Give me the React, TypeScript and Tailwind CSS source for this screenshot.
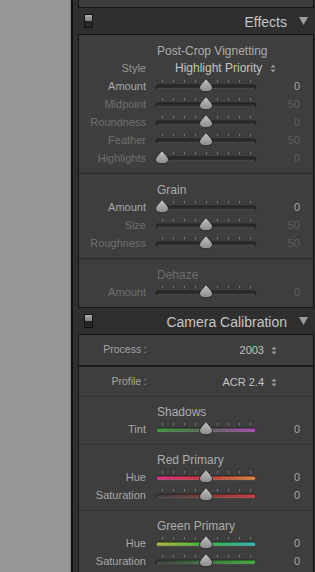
import React from "react";

const font = { fontFamily: '"Liberation Sans", Arial, sans-serif' };

type Track = { id: string; stops: [string, string][] } | null;

const Slider = ({ pos, track, id }: { pos: number; track: Track; id: string }) => {
    const cx = 7 + 88 * pos;
    const ticks = [0, 1, 2, 3, 4, 5, 6, 7, 8];
    return (
        <svg width="102" height="18" viewBox="0 0 102 18" className="shrink-0">
            <defs>
                <linearGradient id={`th-${id}`} x1="0" y1="0" x2="0" y2="1">
                    <stop offset="0" stopColor="#c4c4c4" />
                    <stop offset="1" stopColor="#8a8a8a" />
                </linearGradient>
                {track && (
                    <linearGradient id={`tr-${id}`} x1="0" y1="0" x2="1" y2="0">
                        {track.stops.map(([o, c], i) => (
                            <stop key={i} offset={o} stopColor={c} />
                        ))}
                    </linearGradient>
                )}
            </defs>
            {ticks.map((t) => (
                <line key={t} x1={7.5 + 11 * t} y1="3" x2={7.5 + 11 * t} y2="5.5" stroke="#777" strokeWidth="1" />
            ))}
            <rect x="1" y="8" width="100" height="4.5" rx="2.2" fill={track ? `url(#tr-${id})` : "#2c2c2c"} stroke="#1a1a1a" strokeWidth="0.8" />
            <rect x="1.8" y="11.6" width="98.4" height="0.8" rx="0.4" fill="#7a7a7a" opacity="0.7" />
            <path
                d={`M${cx} 1.5 C${cx + 2} 4.5 ${cx + 6.5} 8 ${cx + 6.5} 11 A6.5 3.8 0 0 1 ${cx - 6.5} 11 C${cx - 6.5} 8 ${cx - 2} 4.5 ${cx} 1.5 Z`}
                fill={`url(#th-${id})`}
                stroke="#1a1a1a"
                strokeWidth="0.8"
            />
        </svg>
    );
};

const UpDown = () => (
    <svg width="6" height="9" viewBox="0 0 6 9" className="shrink-0">
        <path d="M3 0.5 L5.5 3.5 H0.5 Z" fill="#9a9a9a" />
        <path d="M3 8.5 L5.5 5.5 H0.5 Z" fill="#9a9a9a" />
    </svg>
);

const Row = ({
    label,
    value,
    pos,
    dim,
    track = null,
    id,
}: {
    label: string;
    value: string;
    pos: number;
    dim?: boolean;
    track?: Track;
    id: string;
}) => (
    <div className="flex items-center h-[18px]">
        <div className={`w-[67px] text-right text-[11px] ${dim ? "text-[#707070]" : "text-[#a8a8a8]"}`}>{label}</div>
        <div className="ml-[9px]">
            <Slider pos={pos} track={track} id={id} />
        </div>
        <div className={`flex-1 text-right pr-[13px] text-[11px] ${dim ? "text-[#5e5e5e]" : "text-[#a8a8a8]"}`}>{value}</div>
    </div>
);

const Title = ({ text, dim }: { text: string; dim?: boolean }) => (
    <div className={`h-[18px] flex items-center pt-[2px] pl-[78px] text-[12px] ${dim ? "text-[#6c6c6c]" : "text-[#adadad]"}`}>{text}</div>
);

// sub-sections of the Effects panel
const Section = ({ children, first }: { children: React.ReactNode; first?: boolean }) => (
    <div className={`py-[6px] ${first ? "" : "border-t border-[#2a2a2a]"}`}>{children}</div>
);

// sub-sections of the Camera Calibration panel
const CalSection = ({ children }: { children: React.ReactNode }) => (
    <div className="pt-[5px] pb-[6px] border-t border-[#333333]">{children}</div>
);

const Header = ({ title }: { title: string }) => (
    <div className="h-[26px] shrink-0 flex items-center pl-[6px] pr-[6px]">
        <div className="w-[9px] h-[14px] border border-[#141414] flex flex-col">
            <div className="flex-1 bg-gradient-to-b from-[#b0b0b0] to-[#7e7e7e]" />
            <div className="flex-1 bg-[#262626]" />
        </div>
        <div className="flex-1 text-right text-[14px] text-[#c6c6c6] pr-[12px] pt-[2px]">{title}</div>
        <svg width="9" height="8" viewBox="0 0 9 8">
            <path d="M0 0 H9 L4.5 8 Z" fill="#9c9c9c" />
        </svg>
    </div>
);

const Box = ({ children, className = "" }: { children?: React.ReactNode; className?: string }) => (
    <div className={`shrink-0 bg-[#3e3e3e] border border-[#141414] ${className}`}>{children}</div>
);

const PopupRow = ({ label, value }: { label: string; value: string }) => (
    <div className="flex items-center h-[18px]">
        <div className="w-[68px] text-right text-[10.5px] text-[#a4a4a4]">{label}</div>
        <div className="flex-1 flex items-center justify-end pr-[36px]">
            <span className="text-[11px] text-[#c4c4c4] mr-[7px]">{value}</span>
            <UpDown />
        </div>
    </div>
);

export default function App() {
    return (
        <div className="flex w-[315px] h-[572px] overflow-hidden" style={font}>
            <div className="w-[70px] bg-[#979797]" />
            <div className="w-[1px] bg-[#7c7c7c]" />
            <div className="w-[2px] bg-[#111]" />
            <div className="flex-1 bg-[#2f2f2f] pl-[5px] pr-[1px] flex flex-col overflow-hidden">
                <Box className="h-[8px] border-t-0" />
                <Header title="Effects" />
                <Box>
                    <Section first>
                        <Title text="Post-Crop Vignetting" />
                        <div className="flex items-center h-[18px]">
                            <div className="w-[67px] text-right text-[11px] text-[#969696]">Style</div>
                            <div className="ml-[29px] text-[12px] text-[#c4c4c4]">Highlight Priority</div>
                            <div className="ml-[8px]">
                                <UpDown />
                            </div>
                        </div>
                        <Row id="a1" label="Amount" value="0" pos={0.5} />
                        <Row id="a2" label="Midpoint" value="50" pos={0.5} dim />
                        <Row id="a3" label="Roundness" value="0" pos={0.5} dim />
                        <Row id="a4" label="Feather" value="50" pos={0.5} dim />
                        <Row id="a5" label="Highlights" value="0" pos={0} dim />
                    </Section>
                    <Section>
                        <Title text="Grain" />
                        <Row id="b1" label="Amount" value="0" pos={0} />
                        <Row id="b2" label="Size" value="50" pos={0.5} dim />
                        <Row id="b3" label="Roughness" value="50" pos={0.5} dim />
                    </Section>
                    <Section>
                        <Title text="Dehaze" dim />
                        <Row id="c1" label="Amount" value="0" pos={0.5} dim />
                    </Section>
                </Box>
                <Header title="Camera Calibration" />
                <Box className="border-b-0">
                    <div className="py-[6px] border-b-2 border-[#1a1a1a]">
                        <PopupRow label="Process :" value="2003" />
                    </div>
                    <div className="pt-[6px] pb-[5px]">
                        <PopupRow label="Profile :" value="ACR 2.4" />
                    </div>
                    <CalSection>
                        <Title text="Shadows" />
                        <Row
                            id="d1"
                            label="Tint"
                            value="0"
                            pos={0.5}
                            track={{ id: "t", stops: [["0", "#3c9a3c"], ["0.5", "#5a6a5a"], ["1", "#b048b8"]] }}
                        />
                    </CalSection>
                    <CalSection>
                        <Title text="Red Primary" />
                        <Row
                            id="e1"
                            label="Hue"
                            value="0"
                            pos={0.5}
                            track={{ id: "h", stops: [["0", "#d8307c"], ["0.5", "#c83a3a"], ["1", "#d8843c"]] }}
                        />
                        <Row
                            id="e2"
                            label="Saturation"
                            value="0"
                            pos={0.5}
                            track={{ id: "s", stops: [["0", "#3a3a3a"], ["1", "#c83c3c"]] }}
                        />
                    </CalSection>
                    <CalSection>
                        <Title text="Green Primary" />
                        <Row
                            id="f1"
                            label="Hue"
                            value="0"
                            pos={0.5}
                            track={{ id: "g", stops: [["0", "#b4b43a"], ["0.5", "#3cb43c"], ["1", "#34b4b4"]] }}
                        />
                        <Row
                            id="f2"
                            label="Saturation"
                            value="0"
                            pos={0.5}
                            track={{ id: "gs", stops: [["0", "#3a3a3a"], ["1", "#3cb03c"]] }}
                        />
                    </CalSection>
                </Box>
            </div>
        </div>
    );
}
